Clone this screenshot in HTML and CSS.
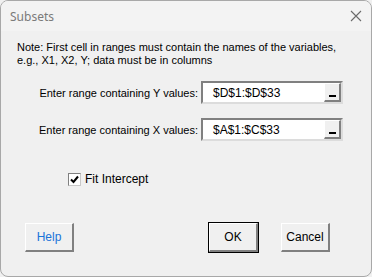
FILE: index.html
```html
<!DOCTYPE html>
<html lang="en">
<head>
    <meta charset="UTF-8">
    <title>Subsets</title>
    <link rel="stylesheet" href="styles.css">
</head>
<body>
    <div class="dialog">
        <div class="titlebar">
            <span class="title">Subsets</span>
            <svg class="close" width="12" height="12" viewBox="0 0 12 12">
                <path d="M1 1 L11 11 M11 1 L1 11" stroke="#6b6b6b" stroke-width="1.1" fill="none"/>
            </svg>
        </div>
        <div class="content">
            <p class="note">Note: First cell in ranges must contain the names of the variables,<br>e.g., X1, X2, Y; data must be in columns</p>

            <div class="field first">
                <span class="label">Enter range containing Y values:</span>
                <div class="range">
                    <span class="value">$D$1:$D$33</span>
                    <span class="pick"><i></i></span>
                </div>
            </div>
            <div class="field">
                <span class="label">Enter range containing X values:</span>
                <div class="range">
                    <span class="value">$A$1:$C$33</span>
                    <span class="pick"><i></i></span>
                </div>
            </div>

            <div class="check">
                <span class="box">
                    <svg width="9" height="9" viewBox="0 0 9 9">
                        <path d="M1 4.5 L3.5 7 L8 1.5" stroke="#000" stroke-width="2" fill="none"/>
                    </svg>
                </span>
                <span>Fit Intercept</span>
            </div>

            <div class="buttons">
                <button class="btn help">Help</button>
                <div class="right">
                    <button class="btn default">OK</button>
                    <button class="btn">Cancel</button>
                </div>
            </div>
        </div>
    </div>
</body>
</html>
```

FILE: styles.css
```css
body {
    margin: 0;
    padding: 0;
    background: #f0f0f0;
    font-family: 'Liberation Sans', Arial, sans-serif;
    font-size: 11px;
    color: #000;
}

.dialog {
    width: 372px;
    height: 277px;
    box-sizing: border-box;
    border: 1px solid #a8a8a8;
    border-radius: 8px;
    background: #f0f0f0;
    overflow: hidden;
}

.titlebar {
    height: 30px;
    background: #f3f3f3;
    display: flex;
    align-items: center;
    justify-content: space-between;
    padding: 0 9px 0 9px;
}

.title {
    font-family: 'Noto Sans', sans-serif;
    font-size: 12px;
    color: #7a7a7a;
}

.content {
    padding: 10px 0 0 16px;
}

.note {
    margin: 0;
    line-height: 13px;
}

.field {
    display: flex;
    align-items: center;
}

.field.first {
    margin-top: 14px;
}

.field + .field {
    margin-top: 14px;
}

.label {
    width: 181px;
    text-align: right;
    margin-right: 3px;
}

.range {
    width: 142px;
    height: 23px;
    box-sizing: border-box;
    background: #fff;
    border-top: 2px solid #808080;
    border-left: 2px solid #808080;
    border-right: 2px solid #dcdcdc;
    border-bottom: 2px solid #dcdcdc;
    display: flex;
    align-items: center;
    justify-content: space-between;
}

.value {
    padding-left: 10px;
    font-size: 12px;
}

.pick {
    width: 17px;
    height: 19px;
    box-sizing: border-box;
    background: #f0f0f0;
    border-top: 1px solid #fff;
    border-left: 1px solid #fff;
    border-right: 2px solid #808080;
    border-bottom: 2px solid #808080;
    display: flex;
    align-items: flex-end;
    justify-content: center;
    padding-bottom: 3px;
}

.pick i {
    display: block;
    width: 7px;
    height: 2px;
    background: #000;
}

.check {
    display: flex;
    align-items: center;
    margin: 31px 0 0 51px;
    font-size: 12px;
}

.box {
    width: 13px;
    height: 13px;
    box-sizing: border-box;
    border-top: 1px solid #808080;
    border-left: 1px solid #808080;
    border-right: 1px solid #c8c8c8;
    border-bottom: 1px solid #c8c8c8;
    background: #fff;
    margin-right: 4px;
    display: flex;
    align-items: center;
    justify-content: center;
}

.buttons {
    display: flex;
    justify-content: space-between;
    margin-top: 37px;
    padding-left: 8px;
    width: 305px;
}

.right {
    display: flex;
    gap: 23px;
}

.btn {
    width: 49px;
    height: 29px;
    box-sizing: border-box;
    background: #f0f0f0;
    border-top: 1px solid #fff;
    border-left: 1px solid #fff;
    border-right: 2px solid #808080;
    border-bottom: 2px solid #808080;
    font-family: 'Liberation Sans', Arial, sans-serif;
    font-size: 12px;
    color: #000;
    padding: 0;
}

.help {
    color: #1a73d9;
}

.default {
    outline: 1px solid #000;
    outline-offset: 0;
}
```
